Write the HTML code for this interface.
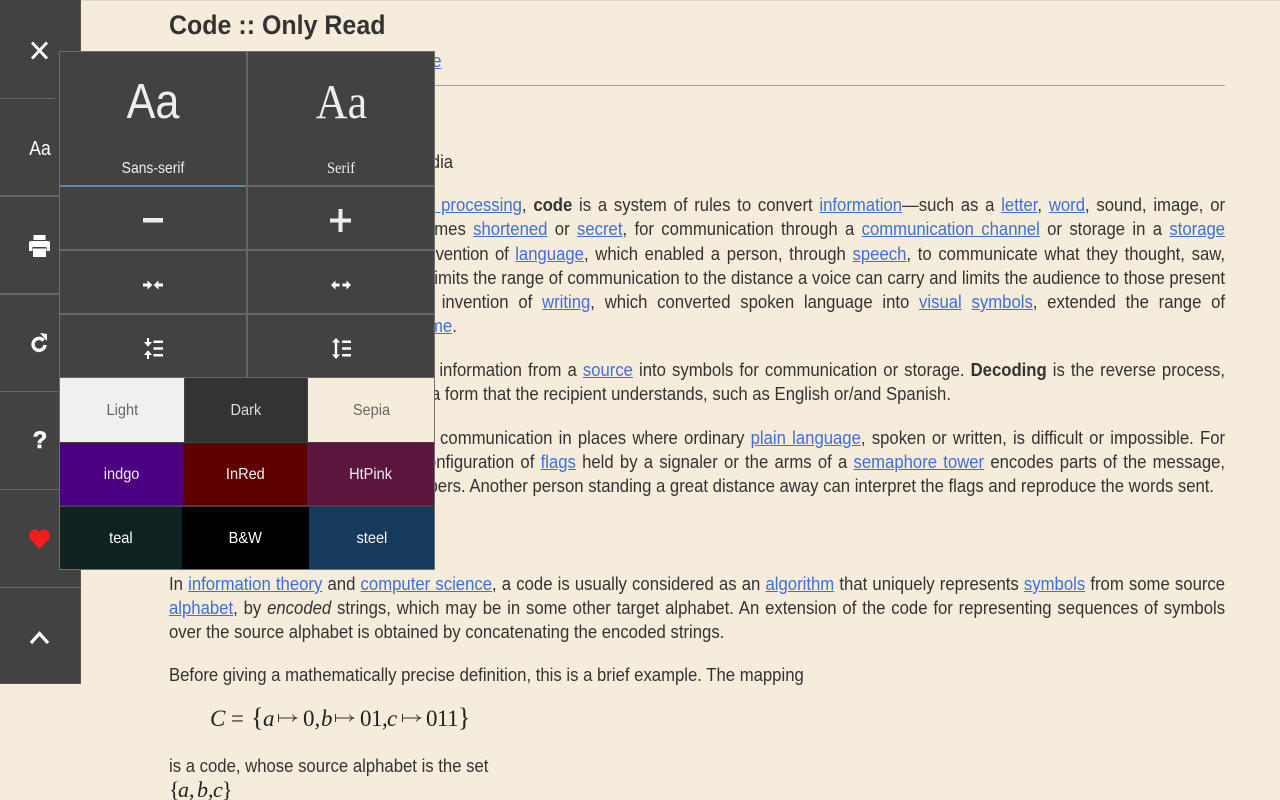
<!DOCTYPE html>
<html><head><meta charset="utf-8"><style>
html,body{margin:0;padding:0;width:1280px;height:800px;overflow:hidden;background:#f5ecdb}
body{font-family:"Liberation Sans",sans-serif;color:#333;position:relative}
a{color:#3f6fd8;text-decoration:underline}
.l{position:absolute;left:169px;width:1138px;height:24px;line-height:24px;font-size:18px;white-space:nowrap;transform:scaleX(.928);transform-origin:0 0}
.j{white-space:normal;text-align:justify;text-align-last:justify}
.abs{position:absolute}
#side{position:absolute;left:0;top:0;width:80px;height:683px;background:#424242;border-right:1px solid #555;border-bottom:1px solid #555}
#side i{position:absolute;left:0;width:81px;height:1.5px;background:#666}
#panel{position:absolute;left:59px;top:51px;width:374px;height:517px;background:#424242;border:1px solid #6e6e6e}
.h,.v{position:absolute;background:#666}
.t{position:absolute;text-align:center;line-height:63px;height:62px;font-size:16px}
.t span{display:inline-block;transform:scaleX(.91)}
svg{position:absolute;overflow:visible}
.m{position:absolute;font-family:"Liberation Serif",serif;color:#222;white-space:nowrap;line-height:30px;font-size:23px}
.m em{font-style:italic}
</style></head><body>
<div class="abs" style="left:0;top:0;width:1280px;height:1px;background:#d9d6cd"></div>
<div class="abs" style="left:169px;top:8px;font-size:27px;line-height:34px;font-weight:bold;white-space:nowrap;color:#333;transform:scaleX(.925);transform-origin:0 0">Code :: Only Read</div>
<div class="l" style="top:49px;left:423px"><a href="#">ge</a></div>
<div class="abs" style="left:169px;top:85px;width:1056px;height:1px;background:#aaa294"></div>
<div class="l" style="top:150px">From Wikipedia, the free encyclopedia</div>

<div class="l j" style="top:193px">In communications and <a href="#">information processing</a>, <b>code</b> is a system of rules to convert <a href="#">information</a>—such as a <a href="#">letter</a>, <a href="#">word</a>, sound, image, or</div>
<div class="l j" style="top:217px">gesture—into another form, sometimes <a href="#">shortened</a> or <a href="#">secret</a>, for communication through a <a href="#">communication channel</a> or storage in a <a href="#">storage</a></div>
<div class="l j" style="top:242px"><span style="letter-spacing:-.15px">medium. An early example is the invention of </span><a href="#">language</a>, which enabled a person, through <a href="#">speech</a>, to communicate what they thought, saw,</div>
<div class="l j" style="top:266px">heard, or felt to others. But speech limits the range of communication to the distance a voice can carry and limits the audience to those present</div>
<div class="l j" style="top:290px">when the speech is uttered. The invention of <a href="#">writing</a>, which converted spoken language into <a href="#">visual</a> <a href="#">symbols</a>, extended the range of</div>
<div class="l" style="top:314px;left:429px"><a href="#">me</a>.</div>

<div class="l j" style="top:358px"><span style="letter-spacing:-.58px">Encoding is the process of converting </span>information from a <a href="#">source</a> into symbols for communication or storage. <b>Decoding</b> is the reverse process,</div>
<div class="l" style="top:382px;left:431px">a form that the recipient understands, such as English or/and Spanish.</div>

<div class="l j" style="top:426px">One reason for coding is to enable communication in places where ordinary <a href="#">plain language</a>, spoken or written, is difficult or impossible. For</div>
<div class="l j" style="top:450px">example, semaphore, where the configuration of <a href="#">flags</a> held by a signaler or the arms of a <a href="#">semaphore tower</a> encodes parts of the message,</div>
<div class="l" style="top:474px;left:396px">numbers. Another person standing a great distance away can interpret the flags and reproduce the words sent.</div>

<div class="l j" style="top:572px">In <a href="#">information theory</a> and <a href="#">computer science</a>, a code is usually considered as an <a href="#">algorithm</a> that uniquely represents <a href="#">symbols</a> from some source</div>
<div class="l j" style="top:596px"><a href="#">alphabet</a>, by <i>encoded</i> strings, which may be in some other target alphabet. An extension of the code for representing sequences of symbols</div>
<div class="l" style="top:620px">over the source alphabet is obtained by concatenating the encoded strings.</div>
<div class="l" style="top:663px">Before giving a mathematically precise definition, this is a brief example. The mapping</div>

<div class="m" style="left:210px;top:704px"><em>C</em></div>
<div class="m" style="left:231px;top:704px">=</div>
<div class="m" style="left:251px;top:703px;font-size:26px">{</div>
<div class="m" style="left:263px;top:704px"><em>a</em></div>
<svg style="left:278px;top:713px" width="19" height="10" viewBox="0 0 19 10"><path d="M.5 1v8M.5 5h18M14.500 1.500Q15.500 4 18.500 5 15.500 6 14.500 8.500" fill="none" stroke="#333" stroke-width="1"/></svg>
<div class="m" style="left:303px;top:704px">0,</div>
<div class="m" style="left:321px;top:704px"><em>b</em></div>
<svg style="left:335px;top:713px" width="19" height="10" viewBox="0 0 19 10"><path d="M.5 1v8M.5 5h18M14.500 1.500Q15.500 4 18.500 5 15.500 6 14.500 8.500" fill="none" stroke="#333" stroke-width="1"/></svg>
<div class="m" style="left:360px;top:704px;letter-spacing:-.5px">01,</div>
<div class="m" style="left:387px;top:704px"><em>c</em></div>
<svg style="left:402px;top:713px" width="19" height="10" viewBox="0 0 19 10"><path d="M.5 1v8M.5 5h18M14.500 1.500Q15.500 4 18.500 5 15.500 6 14.500 8.500" fill="none" stroke="#333" stroke-width="1"/></svg>
<div class="m" style="left:426px;top:704px;letter-spacing:-.5px">011</div>
<div class="m" style="left:458px;top:703px;font-size:26px">}</div>

<div class="l" style="top:754px">is a code, whose source alphabet is the set</div>
<div class="m" style="left:169px;top:775px;font-size:22px">{</div>
<div class="m" style="left:178px;top:775px;font-size:22px"><em>a</em>,</div>
<div class="m" style="left:197px;top:775px;font-size:22px"><em>b</em>,</div>
<div class="m" style="left:213px;top:775px;font-size:22px"><em>c</em></div>
<div class="m" style="left:222px;top:775px;font-size:22px">}</div>

<div id="side">
<i style="top:97.500px;width:55px"></i><i style="top:195px"></i><i style="top:293px"></i><i style="top:390.500px"></i><i style="top:488.500px"></i><i style="top:586.500px"></i>
<svg style="left:31px;top:41px" width="17" height="19" viewBox="0 0 17 19"><path d="M1 1.500L16 17.500M16 1.500L1 17.500" stroke="#fff" stroke-width="2.800"/></svg>
<div class="abs" style="left:20px;width:40px;top:137px;text-align:center;color:#fff;font-size:20px;line-height:24px;transform:scaleX(.88)">Aa</div>
<svg style="left:29px;top:235px" width="21" height="22" viewBox="0 0 21 22"><path fill="#fff" d="M4.500 0h12v5h-12zM2 6h17q2 0 2 2v8h-3.500v-4h-14v4H0V8q0-2 2-2zM4 13.500h13V22H4z"/></svg>
<svg style="left:31px;top:333px" width="17" height="20" viewBox="0 0 17 20"><path fill="none" stroke="#fff" stroke-width="3.400" d="M12.600 7.500A6 6 0 1 0 14 12"/><path fill="#fff" d="M9 0l7 1v7z"/></svg>
<div class="abs" style="left:20px;width:40px;top:427px;text-align:center;color:#fff;font-size:24px;line-height:28px;font-weight:bold;-webkit-text-stroke:.6px #fff">?</div>
<svg style="left:29px;top:529px" width="21" height="20" viewBox="0 0 21 20"><path fill="#f81c1c" d="M10.500 20L1.500 10.500C-1 7.500 0 2.500 3.500 1 6.500-.3 9 1 10.500 3.500 12 1 14.500-.3 17.500 1 21 2.500 22 7.500 19.500 10.500z"/></svg>
<svg style="left:30px;top:630px" width="19" height="14" viewBox="0 0 19 14"><path fill="none" stroke="#fff" stroke-width="3.200" d="M1 13L9.500 3.500 18 13"/></svg>
</div>

<div id="panel">
<div class="v" style="left:186px;top:0;width:2px;height:326px"></div>
<div class="h" style="left:0;top:133px;width:186px;height:2px;background:#5b87b8"></div>
<div class="h" style="left:188px;top:133px;width:186px;height:2px"></div>
<div class="h" style="left:0;top:197px;width:374px;height:1.500px"></div>
<div class="h" style="left:0;top:261px;width:374px;height:1.500px"></div>
<div class="h" style="left:0;top:325px;width:374px;height:1.500px"></div>
<div class="abs" style="left:0;width:186px;top:19px;text-align:center;color:#eee;font-size:49px;line-height:62px;transform:scaleX(.88)">Aa</div>
<div class="abs" style="left:188px;width:187px;top:19px;text-align:center;color:#eee;font-size:49px;line-height:62px;font-family:'Liberation Serif',serif;transform:scaleX(.9)">Aa</div>
<div class="abs" style="left:0;width:186px;top:107px;text-align:center;color:#eee;font-size:16px;line-height:20px;transform:scaleX(.87)">Sans-serif</div>
<div class="abs" style="left:188px;width:186px;top:107px;text-align:center;color:#eee;font-size:16px;line-height:20px;transform:scaleX(.9);font-family:'Liberation Serif',serif">Serif</div>
<svg style="left:83px;top:166px" width="20" height="5"><rect width="20" height="4.500" fill="#eee"/></svg>
<svg style="left:270px;top:157px" width="21" height="23"><path d="M0 9.500h21v4H0zM8.500 0h4v23h-4z" fill="#eee"/></svg>
<svg style="left:83px;top:228px" width="20" height="10" viewBox="0 0 20 10"><path fill="#fff" d="M0 3.500h4.500V0.500L9.300 5 4.500 9.500V6.500H0zM20 3.500h-4.500V0.500L10.700 5 15.500 9.500V6.500H20z"/></svg>
<svg style="left:271px;top:228px" width="20" height="10" viewBox="0 0 20 10"><path fill="#fff" d="M0 5L4.500 0.500v3h4v3h-4v3zM20 5L15.500 0.500v3h-4v3h4v3z"/></svg>
<svg style="left:84px;top:286px" width="19" height="21" viewBox="0 0 19 21"><path fill="#fff" d="M3 0h2v4h3L4 8.800 0 4h3zM3 21h2v-4h3L4 12.200 0 17h3zM9.500 2.500H19V5H9.500zM9.500 9.200H19v2.500H9.500zM9.500 16H19v2.500H9.500z"/></svg>
<svg style="left:272px;top:286px" width="19" height="21" viewBox="0 0 19 21"><path fill="#fff" d="M4 0l4 4.500H5.200v12H8L4 21 0 16.500h2.800v-12H0zM10 2.500h9V5h-9zM10 9.200h9v2.500h-9zM10 16h9v2.500h-9z"/></svg>

<div class="t" style="left:0;top:326px;width:124px;height:64px;line-height:65px;background:#f0f0f0;color:#666"><span>Light</span></div>
<div class="t" style="left:125px;top:326px;width:122px;height:64px;line-height:65px;background:#333;color:#ddd"><span>Dark</span></div>
<div class="t" style="left:248px;top:326px;width:126px;height:64px;line-height:65px;background:#f5ecdb;color:#666"><span>Sepia</span></div>
<div class="t" style="left:0;top:391px;width:123px;background:#4b0082;color:#eee"><span>indgo</span></div>
<div class="t" style="left:123px;top:391px;width:124px;background:#600000;color:#eee"><span>InRed</span></div>
<div class="t" style="left:247px;top:391px;width:127px;background:#5a163c;color:#eee"><span>HtPink</span></div>
<div class="t" style="left:0;top:455px;width:122px;background:#112222;color:#fff"><span>teal</span></div>
<div class="t" style="left:122px;top:455px;width:127px;background:#000;color:#fff"><span>B&amp;W</span></div>
<div class="t" style="left:249px;top:455px;width:125px;background:#153a5c;color:#fff"><span>steel</span></div>
</div>
</body></html>
